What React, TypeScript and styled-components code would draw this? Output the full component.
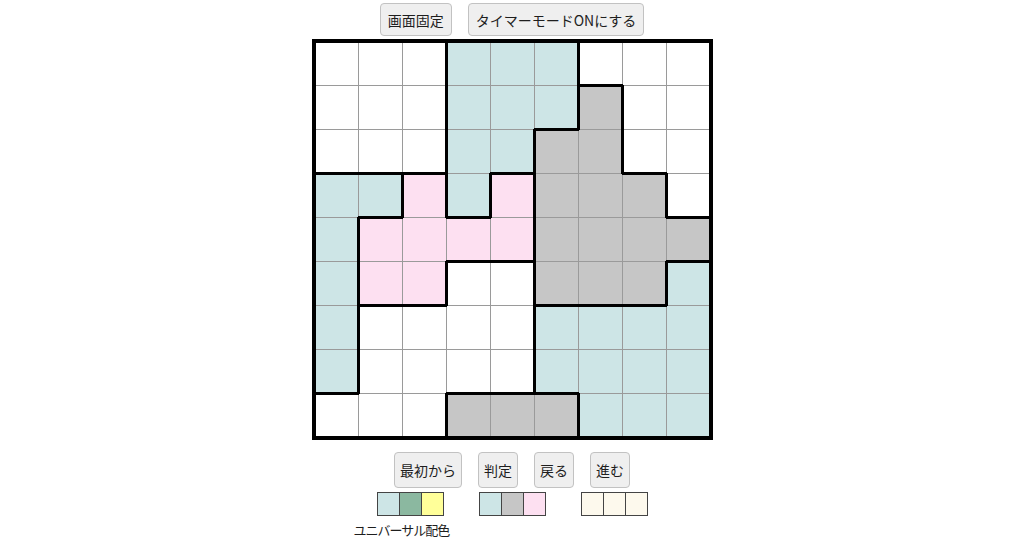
import React from 'react'
import styled, { createGlobalStyle } from 'styled-components'

const GlobalStyle = createGlobalStyle`
  body {
    margin: 0;
    background: #fff;
    font-family: "Noto Sans CJK JP", "Noto Sans", sans-serif;
    color: #222;
  }
`

// region letter -> fill
const REGIONS = [
  'AAABBBDDD',
  'AAABBBCDD',
  'AAABBCCDD',
  'EEFBFCCCD',
  'EFFFFCCCC',
  'EFFGGCCCI',
  'EGGGGIIII',
  'EGGGGIIII',
  'GGGHHHIII',
]

const BLUE = '#cde5e6'
const PINK = '#fde0f1'
const GRAY = '#c6c6c6'
const WHITE = '#ffffff'

const FILL: Record<string, string> = {
  A: WHITE, B: BLUE, C: GRAY, D: WHITE, E: BLUE,
  F: PINK, G: WHITE, H: GRAY, I: BLUE,
}

const Page = styled.div`
  display: flex;
  flex-direction: column;
  align-items: center;
  padding-top: 3px;
`

const ButtonRow = styled.div<{ $space: number }>`
  display: flex;
  gap: 16px;
  justify-content: center;
  margin-bottom: ${p => p.$space}px;
`

const Button = styled.button<{ $tall?: boolean }>`
  height: ${p => (p.$tall ? 36 : 33)}px;
  padding: 0 ${p => (p.$tall ? 5 : 7)}px;
  font-family: inherit;
  font-size: 14px;
  color: #1e1e1e;
  background: #efefef;
  border: 1px solid #c2c2c2;
  border-radius: 4px;
`

const Board = styled.div`
  display: grid;
  grid-template-columns: repeat(9, 43px);
  grid-auto-rows: 43px;
  gap: 1px;
  background: #9a9a9a;
  border: 3px solid #000;
  margin-bottom: 12px;
`

const Cell = styled.div<{ $fill: string; $t: boolean; $r: boolean; $b: boolean; $l: boolean }>`
  position: relative;
  background: ${p => p.$fill};
  &::after {
    content: '';
    position: absolute;
    inset: -1px;
    border-style: solid;
    border-color: #000;
    border-width: ${p => `${p.$t ? 2 : 0}px ${p.$r ? 2 : 0}px ${p.$b ? 2 : 0}px ${p.$l ? 2 : 0}px`};
  }
`

const Legend = styled.div`
  display: flex;
  flex-direction: column;
  align-items: flex-start;
  margin-top: 4px;
`

const PaletteRow = styled.div`
  display: flex;
  gap: 35px;
`

const Palette = styled.div`
  display: flex;
  border: 1px solid #444;
`

const Swatch = styled.div<{ $c: string }>`
  width: 21px;
  height: 22px;
  background: ${p => p.$c};
  & + & {
    border-left: 1px solid #444;
  }
`

const Label = styled.div`
  margin: 5px 0 0 -23px;
  font-size: 13px;
  letter-spacing: -1px;
  line-height: 17px;
  color: #1e1e1e;
`

const region = (r: number, c: number) =>
  r < 0 || r > 8 || c < 0 || c > 8 ? '#' : REGIONS[r][c]

const palettes = [
  ['#cde5e6', '#8bb8a0', '#ffff99'],
  ['#cde5e6', '#c6c6c6', '#fde0f1'],
  ['#fdf9ed', '#fdf9ed', '#fdf9ed'],
]

export default function App() {
  const cells = []
  for (let r = 0; r < 9; r++) {
    for (let c = 0; c < 9; c++) {
      const me = region(r, c)
      cells.push(
        <Cell
          key={`${r}-${c}`}
          $fill={FILL[me]}
          $t={region(r - 1, c) !== me}
          $r={region(r, c + 1) !== me}
          $b={region(r + 1, c) !== me}
          $l={region(r, c - 1) !== me}
        />
      )
    }
  }

  return (
    <>
      <GlobalStyle />
      <Page>
        <ButtonRow $space={3}>
          <Button>画面固定</Button>
          <Button>タイマーモードONにする</Button>
        </ButtonRow>
        <Board>{cells}</Board>
        <ButtonRow $space={0}>
          <Button $tall>最初から</Button>
          <Button $tall>判定</Button>
          <Button $tall>戻る</Button>
          <Button $tall>進む</Button>
        </ButtonRow>
        <Legend>
          <PaletteRow>
            {palettes.map((p, i) => (
              <Palette key={i}>
                {p.map((col, j) => <Swatch key={j} $c={col} />)}
              </Palette>
            ))}
          </PaletteRow>
          <Label>ユニバーサル配色</Label>
        </Legend>
      </Page>
    </>
  )
}
